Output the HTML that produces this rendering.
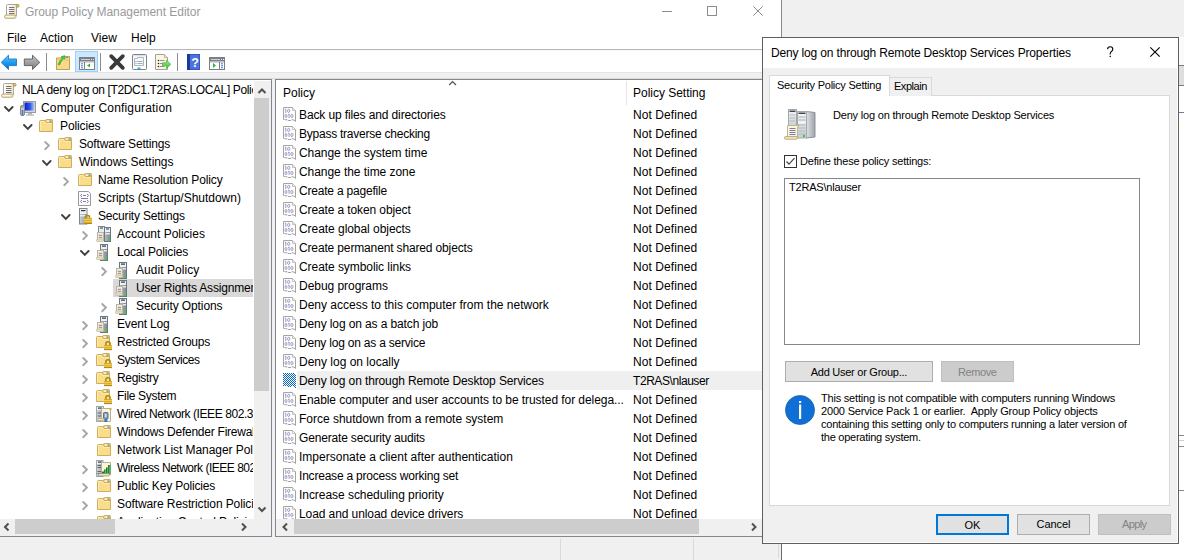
<!DOCTYPE html><html><head><meta charset="utf-8"><style>
html,body{margin:0;padding:0;width:1184px;height:560px;overflow:hidden;background:#f0f0f0;font-family:"Liberation Sans", sans-serif;}
.t{position:absolute;white-space:pre;font-family:"Liberation Sans", sans-serif;}
.bt{font-family:"Liberation Sans", sans-serif;font-size:11px;padding-top:0px;letter-spacing:-0.2px;white-space:pre}
svg{overflow:visible}
</style></head><body>
<div style="position:absolute;left:0px;top:0px;width:781px;height:72px;background:#fff"></div>
<div style="position:absolute;left:781px;top:0px;width:1px;height:38px;background:#8a8a8a"></div>
<div style="position:absolute;left:782px;top:0px;width:402px;height:560px;background:#f0f0f0"></div>
<svg style="position:absolute;left:4px;top:3px;" width="17" height="17" viewBox="0 0 17 17"><defs><linearGradient id="scg" x1="0" x2="1"><stop offset="0" stop-color="#fffdf4"/><stop offset="1" stop-color="#f8e8b0"/></linearGradient></defs><path d="M2.5 2.5 Q2.5 1.5 3.5 1.5 L13.5 1.5 L12.5 3 L12.5 12.5 L2.5 12.5 Z" fill="url(#scg)" stroke="#a6a6a6"/><circle cx="13.6" cy="2.8" r="1.5" fill="#d8c27a" stroke="#9c8a50" stroke-width="0.7"/><path d="M5 4.5h5.5M5 6.5h5.5M5 8.5h5.5M5 10.5h5.5" stroke="#6e6e98" stroke-width="1"/><rect x="0.5" y="12" width="11.5" height="3.3" rx="1.6" fill="#f7ebbc" stroke="#a9a27c" stroke-width="0.9"/><path d="M2 13.6h7" stroke="#fffbe8" stroke-width="0.9"/></svg>
<div class="t" style="left:25px;top:3px;font-size:12px;line-height:18px;color:#999999;;letter-spacing:-0.045px;">Group Policy Management Editor</div>
<div style="position:absolute;left:662px;top:11px;width:10px;height:1px;background:#8c8c8c"></div>
<div style="position:absolute;left:707px;top:6px;width:10px;height:10px;border:1px solid #8c8c8c;box-sizing:border-box"></div>
<svg style="position:absolute;left:753px;top:6px;" width="10" height="10" viewBox="0 0 10 10"><path d="M0.3 0.3 L9.7 9.7 M9.7 0.3 L0.3 9.7" stroke="#8c8c8c" stroke-width="1"/></svg>
<div class="t" style="left:7px;top:29px;font-size:12px;line-height:18px;color:#000;;">File</div>
<div class="t" style="left:40px;top:29px;font-size:12px;line-height:18px;color:#000;;">Action</div>
<div class="t" style="left:91px;top:29px;font-size:12px;line-height:18px;color:#000;;">View</div>
<div class="t" style="left:131px;top:29px;font-size:12px;line-height:18px;color:#000;;">Help</div>
<div style="position:absolute;left:0px;top:49px;width:781px;height:1px;background:#b9b9b9"></div>
<div style="position:absolute;left:0px;top:72px;width:781px;height:8px;background:#f0f0f0"></div>
<div style="position:absolute;left:0px;top:72px;width:781px;height:1px;background:#e4e4e4"></div>
<div style="position:absolute;left:0px;top:78px;width:781px;height:1px;background:#dadada"></div>
<div style="position:absolute;left:0px;top:79px;width:272px;height:458px;background:#fff;border:1px solid #828790;border-left:none;box-sizing:border-box"></div>
<div style="position:absolute;left:275px;top:79px;width:500px;height:458px;background:#fff;border:1px solid #828790;box-sizing:border-box"></div>
<div style="position:absolute;left:0px;top:50px;width:781px;height:1px;background:#f5f7fa"></div>
<svg style="position:absolute;left:0px;top:50px;" width="50" height="22" viewBox="0 0 50 22"><defs><linearGradient id="gb" x1="0" y1="0" x2="0" y2="1"><stop offset="0" stop-color="#6ccaff"/><stop offset="0.5" stop-color="#1e9cf0"/><stop offset="1" stop-color="#0a6fd0"/></linearGradient><linearGradient id="gg" x1="0" y1="0" x2="0" y2="1"><stop offset="0" stop-color="#c8c8c8"/><stop offset="1" stop-color="#7a7a7a"/></linearGradient></defs><path d="M1.2 12.4 L8.5 5.2 L8.5 9 L16.5 9 L16.5 15.6 L8.5 15.6 L8.5 19.5 Z" fill="url(#gb)" stroke="#1f78c8" stroke-width="0.9" stroke-linejoin="round"/><path d="M39.8 12.4 L32.5 5.2 L32.5 9 L24.3 9 L24.3 15.6 L32.5 15.6 L32.5 19.5 Z" fill="url(#gg)" stroke="#5a5a5a" stroke-width="0.9" stroke-linejoin="round"/></svg>
<div style="position:absolute;left:46px;top:53px;width:1px;height:18px;background:#8c8c8c"></div>
<svg style="position:absolute;left:56px;top:55px;" width="16" height="16" viewBox="0 0 16 16"><path d="M0.5 3 L5 3 L6 1.5 L13.5 1.5 L13.5 14.5 L0.5 14.5 Z" fill="#f8d98a" stroke="#c0a050"/><path d="M0.5 5 L13.5 5" stroke="#e9c46a"/><rect x="10" y="2" width="2" height="1" fill="#4a90e2"/><path d="M2 9.5 Q4 5 6.5 3 L5 2 L8.5 0.5 L9 4 L7.5 3.5 Q5 6 3.5 10 Z" fill="#3fd13f" stroke="#2a9a2a" stroke-width="0.6"/></svg>
<div style="position:absolute;left:75px;top:51px;width:23px;height:21px;background:#cce8ff;border:1px solid #99d1ff;box-sizing:border-box"></div>
<svg style="position:absolute;left:79px;top:57px;" width="16" height="13" viewBox="0 0 16 13"><rect x="0.5" y="0.5" width="15" height="12" fill="#fff" stroke="#7a7f88"/><rect x="1" y="1" width="14" height="3" fill="#7a7f88"/><rect x="2" y="2" width="9" height="0.8" fill="#e8e8e8"/><rect x="12" y="2" width="1" height="1" fill="#e8e8e8"/><rect x="14" y="2" width="1" height="1" fill="#e8e8e8"/><rect x="1" y="4.5" width="14" height="0.8" fill="#7a7f88"/><rect x="5" y="5" width="1" height="7" fill="#7a7f88"/><rect x="2" y="6.3" width="2" height="1" fill="#3c7ad0"/><rect x="2" y="8.3" width="2" height="1" fill="#3c7ad0"/><rect x="2" y="10.3" width="2" height="1" fill="#3c7ad0"/><path d="M11 6.5 L8 8.5 L11 10.5 Z" fill="#35b535"/></svg>
<div style="position:absolute;left:100px;top:53px;width:1px;height:18px;background:#8c8c8c"></div>
<svg style="position:absolute;left:109px;top:54px;" width="16" height="16" viewBox="0 0 16 16"><path d="M2.2 2.2 L13.8 13.8 M13.8 2.2 L2.2 13.8" stroke="#3a3a3a" stroke-width="3.8" stroke-linecap="round"/></svg>
<svg style="position:absolute;left:132px;top:54px;" width="16" height="16" viewBox="0 0 16 16"><rect x="0.5" y="0.5" width="14" height="15" rx="1" fill="#fff" stroke="#7d828a"/><rect x="1" y="1" width="13" height="1.5" fill="#dfe3e8"/><path d="M2.5 4.5 L5.5 4.5 L5.5 3.5 L11.5 3.5 L11.5 11.5 L2.5 11.5 Z" fill="#f7f9fb" stroke="#9aa3ad" stroke-width="0.8"/><rect x="3.5" y="7" width="1" height="1" fill="#1aa3ff"/><rect x="5.5" y="7" width="5" height="0.9" fill="#9aa3ad"/><rect x="3.5" y="9" width="1" height="1" fill="#9aa3ad"/><rect x="5.5" y="9" width="5" height="0.9" fill="#9aa3ad"/><rect x="5.5" y="13.5" width="3" height="1.5" fill="#1ab8ff"/></svg>
<svg style="position:absolute;left:155px;top:54px;" width="17" height="16" viewBox="0 0 17 16"><path d="M0.5 0.5 L9.5 0.5 L12.5 3.5 L12.5 15.5 L0.5 15.5 Z" fill="#fcf6dc" stroke="#a0a0a0"/><path d="M9.5 0.5 L9.5 3.5 L12.5 3.5" fill="#e8e8e8" stroke="#a8a8a8" stroke-width="0.8"/><circle cx="3.5" cy="6.5" r="0.8" fill="#222"/><rect x="5" y="6.1" width="4.5" height="0.9" fill="#8080b0"/><circle cx="3.5" cy="9.5" r="0.8" fill="#222"/><rect x="5" y="9.1" width="4.5" height="0.9" fill="#8080b0"/><circle cx="3.5" cy="12.5" r="0.8" fill="#222"/><rect x="5" y="12.1" width="4.5" height="0.9" fill="#8080b0"/><defs><linearGradient id="ga" x1="0" x2="0" y1="0" y2="1"><stop offset="0" stop-color="#9ff08a"/><stop offset="1" stop-color="#3cc02c"/></linearGradient></defs><path d="M7.5 8.8 L11.5 8.8 L11.5 6.2 L15.8 10.3 L11.5 14.4 L11.5 11.8 L7.5 11.8 Z" fill="url(#ga)" stroke="#46b236" stroke-width="0.7" stroke-linejoin="round"/></svg>
<div style="position:absolute;left:177px;top:53px;width:1px;height:18px;background:#8c8c8c"></div>
<svg style="position:absolute;left:187px;top:54px;" width="13" height="16" viewBox="0 0 13 16"><rect x="0" y="0" width="13" height="16" fill="#3357c8"/><rect x="0" y="0" width="3" height="16" fill="#1c37a0"/><rect x="3" y="1" width="9" height="14" fill="#4d72dc"/><text x="4.2" y="13" font-size="12.5" font-family="Liberation Sans" font-weight="bold" fill="#fff">?</text></svg>
<svg style="position:absolute;left:209px;top:57px;" width="16" height="13" viewBox="0 0 16 13"><rect x="0.5" y="0.5" width="15" height="12" fill="#fff" stroke="#7a7f88"/><rect x="1" y="1" width="14" height="3" fill="#7a7f88"/><rect x="2" y="2" width="9" height="0.8" fill="#e8e8e8"/><rect x="12" y="2" width="1" height="1" fill="#e8e8e8"/><rect x="14" y="2" width="1" height="1" fill="#e8e8e8"/><rect x="1" y="4.5" width="14" height="0.8" fill="#7a7f88"/><rect x="10" y="5" width="1" height="7" fill="#7a7f88"/><rect x="12" y="6.3" width="2" height="1" fill="#3c7ad0"/><rect x="12" y="8.3" width="2" height="1" fill="#3c7ad0"/><rect x="12" y="10.3" width="2" height="1" fill="#3c7ad0"/><path d="M4 6 L7 8.5 L4 11 Z" fill="#35b535"/></svg>
<div style="position:absolute;left:0px;top:81px;width:253px;height:438px;overflow:hidden"><svg style="position:absolute;left:1px;top:1px;" width="17" height="17" viewBox="0 0 17 17"><defs><linearGradient id="scg" x1="0" x2="1"><stop offset="0" stop-color="#fffdf4"/><stop offset="1" stop-color="#f8e8b0"/></linearGradient></defs><path d="M2.5 2.5 Q2.5 1.5 3.5 1.5 L13.5 1.5 L12.5 3 L12.5 12.5 L2.5 12.5 Z" fill="url(#scg)" stroke="#a6a6a6"/><circle cx="13.6" cy="2.8" r="1.5" fill="#d8c27a" stroke="#9c8a50" stroke-width="0.7"/><path d="M5 4.5h5.5M5 6.5h5.5M5 8.5h5.5M5 10.5h5.5" stroke="#6e6e98" stroke-width="1"/><rect x="0.5" y="12" width="11.5" height="3.3" rx="1.6" fill="#f7ebbc" stroke="#a9a27c" stroke-width="0.9"/><path d="M2 13.6h7" stroke="#fffbe8" stroke-width="0.9"/></svg><div class="t" style="left:22px;top:0px;font-size:12px;line-height:18px;color:#000;;letter-spacing:-0.368px;">NLA deny log on [T2DC1.T2RAS.LOCAL] Policy</div><svg style="position:absolute;left:4px;top:25px;" width="10" height="7" viewBox="0 0 10 7"><path d="M1 1 L4.8 4.8 L8.6 1" fill="none" stroke="#404040" stroke-width="1.9" stroke-linecap="round"/></svg><svg style="position:absolute;left:20px;top:20px;" width="17" height="16" viewBox="0 0 17 16"><defs><linearGradient id="scr" x1="0" x2="1"><stop offset="0" stop-color="#0a1fd0"/><stop offset="0.55" stop-color="#2a55e8"/><stop offset="1" stop-color="#b8ccf6"/></linearGradient></defs><rect x="3.5" y="0.5" width="12" height="11" fill="#d6d6d6" stroke="#9a9a9a"/><rect x="4.5" y="1.5" width="10" height="8" fill="url(#scr)"/><rect x="8" y="12" width="4" height="1.5" fill="#b5b5b5"/><rect x="6" y="13.5" width="8" height="1" fill="#a0a0a0"/><rect x="0.5" y="4.5" width="4" height="10" rx="1.5" fill="#c8c8c8" stroke="#8a8a8a"/><rect x="1.7" y="9" width="1.6" height="5.5" fill="#3a78d8"/><rect x="1.5" y="5.5" width="2" height="1" fill="#777"/></svg><div class="t" style="left:41px;top:18px;font-size:12px;line-height:18px;color:#000;;letter-spacing:0.167px;">Computer Configuration</div><svg style="position:absolute;left:23px;top:43px;" width="10" height="7" viewBox="0 0 10 7"><path d="M1 1 L4.8 4.8 L8.6 1" fill="none" stroke="#404040" stroke-width="1.9" stroke-linecap="round"/></svg><svg style="position:absolute;left:39px;top:37px;" width="14" height="15" viewBox="0 0 14 15"><path d="M6.5 4.5 L6.5 2.5 Q6.5 1.5 7.5 1.5 L13 1.5 Q13.5 1.5 13.5 2.5 L13.5 5" fill="#f3d07a" stroke="#cfae5a"/><rect x="8" y="2.6" width="2.5" height="1.1" fill="#ffffff"/><rect x="10.5" y="2.6" width="2" height="1.1" fill="#3f86e0"/><path d="M0.5 13.5 L0.5 3.5 Q0.5 2.5 1.5 2.5 L6 2.5 L7 4.5 L13.5 4.5 L13.5 13.5 Z" fill="#f9dc8c" stroke="#cfae5a"/><path d="M1.5 12.5 L1.5 3.5 L5.6 3.5 L6.6 5.5 L12.5 5.5" fill="none" stroke="#fdebb4" stroke-width="1"/></svg><div class="t" style="left:60px;top:36px;font-size:12px;line-height:18px;color:#000;;letter-spacing:-0.114px;">Policies</div><svg style="position:absolute;left:44px;top:60px;" width="7" height="10" viewBox="0 0 7 10"><path d="M1.2 1 L4.9 4.6 L1.2 8.2" fill="none" stroke="#a6a6a6" stroke-width="1.9" stroke-linecap="round"/></svg><svg style="position:absolute;left:58px;top:55px;" width="14" height="15" viewBox="0 0 14 15"><path d="M6.5 4.5 L6.5 2.5 Q6.5 1.5 7.5 1.5 L13 1.5 Q13.5 1.5 13.5 2.5 L13.5 5" fill="#f3d07a" stroke="#cfae5a"/><rect x="8" y="2.6" width="2.5" height="1.1" fill="#ffffff"/><rect x="10.5" y="2.6" width="2" height="1.1" fill="#3f86e0"/><path d="M0.5 13.5 L0.5 3.5 Q0.5 2.5 1.5 2.5 L6 2.5 L7 4.5 L13.5 4.5 L13.5 13.5 Z" fill="#f9dc8c" stroke="#cfae5a"/><path d="M1.5 12.5 L1.5 3.5 L5.6 3.5 L6.6 5.5 L12.5 5.5" fill="none" stroke="#fdebb4" stroke-width="1"/></svg><div class="t" style="left:79px;top:54px;font-size:12px;line-height:18px;color:#000;;letter-spacing:-0.175px;">Software Settings</div><svg style="position:absolute;left:42px;top:79px;" width="10" height="7" viewBox="0 0 10 7"><path d="M1 1 L4.8 4.8 L8.6 1" fill="none" stroke="#404040" stroke-width="1.9" stroke-linecap="round"/></svg><svg style="position:absolute;left:58px;top:73px;" width="14" height="15" viewBox="0 0 14 15"><path d="M6.5 4.5 L6.5 2.5 Q6.5 1.5 7.5 1.5 L13 1.5 Q13.5 1.5 13.5 2.5 L13.5 5" fill="#f3d07a" stroke="#cfae5a"/><rect x="8" y="2.6" width="2.5" height="1.1" fill="#ffffff"/><rect x="10.5" y="2.6" width="2" height="1.1" fill="#3f86e0"/><path d="M0.5 13.5 L0.5 3.5 Q0.5 2.5 1.5 2.5 L6 2.5 L7 4.5 L13.5 4.5 L13.5 13.5 Z" fill="#f9dc8c" stroke="#cfae5a"/><path d="M1.5 12.5 L1.5 3.5 L5.6 3.5 L6.6 5.5 L12.5 5.5" fill="none" stroke="#fdebb4" stroke-width="1"/></svg><div class="t" style="left:79px;top:72px;font-size:12px;line-height:18px;color:#000;;letter-spacing:-0.06px;">Windows Settings</div><svg style="position:absolute;left:63px;top:96px;" width="7" height="10" viewBox="0 0 7 10"><path d="M1.2 1 L4.9 4.6 L1.2 8.2" fill="none" stroke="#a6a6a6" stroke-width="1.9" stroke-linecap="round"/></svg><svg style="position:absolute;left:78px;top:91px;" width="14" height="15" viewBox="0 0 14 15"><path d="M6.5 4.5 L6.5 2.5 Q6.5 1.5 7.5 1.5 L13 1.5 Q13.5 1.5 13.5 2.5 L13.5 5" fill="#f3d07a" stroke="#cfae5a"/><rect x="8" y="2.6" width="2.5" height="1.1" fill="#ffffff"/><rect x="10.5" y="2.6" width="2" height="1.1" fill="#3f86e0"/><path d="M0.5 13.5 L0.5 3.5 Q0.5 2.5 1.5 2.5 L6 2.5 L7 4.5 L13.5 4.5 L13.5 13.5 Z" fill="#f9dc8c" stroke="#cfae5a"/><path d="M1.5 12.5 L1.5 3.5 L5.6 3.5 L6.6 5.5 L12.5 5.5" fill="none" stroke="#fdebb4" stroke-width="1"/></svg><div class="t" style="left:98px;top:90px;font-size:12px;line-height:18px;color:#000;;letter-spacing:-0.129px;">Name Resolution Policy</div><svg style="position:absolute;left:78px;top:110px;" width="14" height="16" viewBox="0 0 14 16"><path d="M0.5 0.5 L10.5 0.5 L12.5 2.5 L12.5 14.5 L0.5 14.5 Z" fill="#fafafa" stroke="#9a9a9a"/><path d="M4 3 L2.5 4.5 L4 6 M9 3 L10.5 4.5 L9 6 M5 4.5h3 M3 7.5h7 M4 9 L2.5 10.5 L4 12 M9 9 L10.5 10.5 L9 12 M5 10.5h3" fill="none" stroke="#7070a0" stroke-width="0.9"/></svg><div class="t" style="left:98px;top:108px;font-size:12px;line-height:18px;color:#000;;letter-spacing:-0.02px;">Scripts (Startup/Shutdown)</div><svg style="position:absolute;left:61px;top:133px;" width="10" height="7" viewBox="0 0 10 7"><path d="M1 1 L4.8 4.8 L8.6 1" fill="none" stroke="#404040" stroke-width="1.9" stroke-linecap="round"/></svg><svg style="position:absolute;left:77px;top:127px;" width="16" height="17" viewBox="0 0 16 17"><defs><linearGradient id="slg" x1="0" x2="1"><stop offset="0" stop-color="#c9d0d6"/><stop offset="1" stop-color="#8e98a0"/></linearGradient></defs><rect x="2.5" y="0.5" width="7.5" height="15.5" fill="url(#slg)" stroke="#7d8790"/><rect x="3" y="1" width="6.5" height="5" fill="#eef2f4"/><rect x="4" y="2" width="4.5" height="1.2" fill="#2a3a44"/><rect x="3" y="7" width="6.5" height="1.5" fill="#e6eaed"/><path d="M8.5 10.5 L8.5 9 Q8.5 7.5 10.5 7.5 Q12.5 7.5 12.5 9 L12.5 10.5" fill="none" stroke="#b08a1a" stroke-width="1.6"/><rect x="7" y="10" width="8" height="6" fill="#dcae28"/><path d="M7 11.5h8M7 13.5h8" stroke="#f0d060" stroke-width="0.8"/><rect x="7" y="15.2" width="8" height="0.8" fill="#a87e10"/></svg><div class="t" style="left:98px;top:126px;font-size:12px;line-height:18px;color:#000;;letter-spacing:-0.194px;">Security Settings</div><svg style="position:absolute;left:82px;top:150px;" width="7" height="10" viewBox="0 0 7 10"><path d="M1.2 1 L4.9 4.6 L1.2 8.2" fill="none" stroke="#a6a6a6" stroke-width="1.9" stroke-linecap="round"/></svg><svg style="position:absolute;left:96px;top:145px;" width="16" height="17" viewBox="0 0 16 17"><defs><linearGradient id="sg" x1="0" x2="1"><stop offset="0" stop-color="#b4bcc4"/><stop offset="1" stop-color="#7f8992"/></linearGradient></defs><rect x="2.5" y="0.5" width="6" height="14" fill="#e9ecef" stroke="#7d8590"/><rect x="4" y="1.5" width="3" height="1" fill="#2a3a44"/><rect x="8.5" y="1.5" width="6" height="14" fill="url(#sg)" stroke="#6e7780"/><rect x="9" y="2" width="5" height="4" fill="#eef1f3"/><rect x="10" y="2.5" width="3" height="1" fill="#2a3a44"/><rect x="9" y="7" width="5" height="1.5" fill="#e3e7ea"/><rect x="12" y="12.5" width="2" height="2" fill="#3ad23a"/><rect x="1.5" y="6.5" width="6" height="7" fill="#fbefc4" stroke="#b4b4b4"/><path d="M2.8 9.3h3.4M2.8 11.3h3.4" stroke="#7878b0" stroke-width="0.9"/><rect x="0.5" y="13" width="7" height="2.5" rx="0.8" fill="#efe0a8" stroke="#b8b8b8" stroke-width="0.7"/></svg><div class="t" style="left:117px;top:144px;font-size:12px;line-height:18px;color:#000;;letter-spacing:-0.007px;">Account Policies</div><svg style="position:absolute;left:80px;top:169px;" width="10" height="7" viewBox="0 0 10 7"><path d="M1 1 L4.8 4.8 L8.6 1" fill="none" stroke="#404040" stroke-width="1.9" stroke-linecap="round"/></svg><svg style="position:absolute;left:96px;top:163px;" width="16" height="17" viewBox="0 0 16 17"><defs><linearGradient id="sg" x1="0" x2="1"><stop offset="0" stop-color="#b4bcc4"/><stop offset="1" stop-color="#7f8992"/></linearGradient></defs><rect x="4.5" y="0.5" width="7" height="16" fill="url(#sg)" stroke="#6e7780"/><rect x="5" y="1" width="6" height="4" fill="#eef1f3"/><rect x="6" y="1.5" width="4" height="1.2" fill="#2a3a44"/><rect x="5" y="6" width="6" height="1.5" fill="#e3e7ea"/><rect x="9" y="13.5" width="2" height="2" fill="#3ad23a"/><rect x="1.5" y="6.5" width="6" height="7" fill="#fbefc4" stroke="#b4b4b4"/><path d="M2.8 9.3h3.4M2.8 11.3h3.4" stroke="#7878b0" stroke-width="0.9"/><rect x="0.5" y="13" width="7" height="2.5" rx="0.8" fill="#efe0a8" stroke="#b8b8b8" stroke-width="0.7"/></svg><div class="t" style="left:117px;top:162px;font-size:12px;line-height:18px;color:#000;;letter-spacing:-0.169px;">Local Policies</div><svg style="position:absolute;left:101px;top:186px;" width="7" height="10" viewBox="0 0 7 10"><path d="M1.2 1 L4.9 4.6 L1.2 8.2" fill="none" stroke="#a6a6a6" stroke-width="1.9" stroke-linecap="round"/></svg><svg style="position:absolute;left:115px;top:181px;" width="16" height="17" viewBox="0 0 16 17"><defs><linearGradient id="sg" x1="0" x2="1"><stop offset="0" stop-color="#b4bcc4"/><stop offset="1" stop-color="#7f8992"/></linearGradient></defs><rect x="4.5" y="0.5" width="7" height="16" fill="url(#sg)" stroke="#6e7780"/><rect x="5" y="1" width="6" height="4" fill="#eef1f3"/><rect x="6" y="1.5" width="4" height="1.2" fill="#2a3a44"/><rect x="5" y="6" width="6" height="1.5" fill="#e3e7ea"/><rect x="9" y="13.5" width="2" height="2" fill="#3ad23a"/><rect x="1.5" y="6.5" width="6" height="7" fill="#fbefc4" stroke="#b4b4b4"/><path d="M2.8 9.3h3.4M2.8 11.3h3.4" stroke="#7878b0" stroke-width="0.9"/><rect x="0.5" y="13" width="7" height="2.5" rx="0.8" fill="#efe0a8" stroke="#b8b8b8" stroke-width="0.7"/></svg><div class="t" style="left:136px;top:180px;font-size:12px;line-height:18px;color:#000;;letter-spacing:0.045px;">Audit Policy</div><div style="position:absolute;left:113px;top:198px;width:140px;height:18px;background:#d9d9d9"></div><svg style="position:absolute;left:115px;top:199px;" width="16" height="17" viewBox="0 0 16 17"><defs><linearGradient id="sg" x1="0" x2="1"><stop offset="0" stop-color="#b4bcc4"/><stop offset="1" stop-color="#7f8992"/></linearGradient></defs><rect x="4.5" y="0.5" width="7" height="16" fill="url(#sg)" stroke="#6e7780"/><rect x="5" y="1" width="6" height="4" fill="#eef1f3"/><rect x="6" y="1.5" width="4" height="1.2" fill="#2a3a44"/><rect x="5" y="6" width="6" height="1.5" fill="#e3e7ea"/><rect x="9" y="13.5" width="2" height="2" fill="#3ad23a"/><rect x="1.5" y="6.5" width="6" height="7" fill="#fbefc4" stroke="#b4b4b4"/><path d="M2.8 9.3h3.4M2.8 11.3h3.4" stroke="#7878b0" stroke-width="0.9"/><rect x="0.5" y="13" width="7" height="2.5" rx="0.8" fill="#efe0a8" stroke="#b8b8b8" stroke-width="0.7"/></svg><div class="t" style="left:136px;top:198px;font-size:12px;line-height:18px;color:#000;;letter-spacing:-0.174px;">User Rights Assignment</div><svg style="position:absolute;left:101px;top:222px;" width="7" height="10" viewBox="0 0 7 10"><path d="M1.2 1 L4.9 4.6 L1.2 8.2" fill="none" stroke="#a6a6a6" stroke-width="1.9" stroke-linecap="round"/></svg><svg style="position:absolute;left:115px;top:217px;" width="16" height="17" viewBox="0 0 16 17"><defs><linearGradient id="sg" x1="0" x2="1"><stop offset="0" stop-color="#b4bcc4"/><stop offset="1" stop-color="#7f8992"/></linearGradient></defs><rect x="4.5" y="0.5" width="7" height="16" fill="url(#sg)" stroke="#6e7780"/><rect x="5" y="1" width="6" height="4" fill="#eef1f3"/><rect x="6" y="1.5" width="4" height="1.2" fill="#2a3a44"/><rect x="5" y="6" width="6" height="1.5" fill="#e3e7ea"/><rect x="9" y="13.5" width="2" height="2" fill="#3ad23a"/><rect x="1.5" y="6.5" width="6" height="7" fill="#fbefc4" stroke="#b4b4b4"/><path d="M2.8 9.3h3.4M2.8 11.3h3.4" stroke="#7878b0" stroke-width="0.9"/><rect x="0.5" y="13" width="7" height="2.5" rx="0.8" fill="#efe0a8" stroke="#b8b8b8" stroke-width="0.7"/></svg><div class="t" style="left:136px;top:216px;font-size:12px;line-height:18px;color:#000;;letter-spacing:-0.1px;">Security Options</div><svg style="position:absolute;left:82px;top:240px;" width="7" height="10" viewBox="0 0 7 10"><path d="M1.2 1 L4.9 4.6 L1.2 8.2" fill="none" stroke="#a6a6a6" stroke-width="1.9" stroke-linecap="round"/></svg><svg style="position:absolute;left:96px;top:235px;" width="16" height="17" viewBox="0 0 16 17"><defs><linearGradient id="sg" x1="0" x2="1"><stop offset="0" stop-color="#b4bcc4"/><stop offset="1" stop-color="#7f8992"/></linearGradient></defs><rect x="4.5" y="0.5" width="7" height="16" fill="url(#sg)" stroke="#6e7780"/><rect x="5" y="1" width="6" height="4" fill="#eef1f3"/><rect x="6" y="1.5" width="4" height="1.2" fill="#2a3a44"/><rect x="5" y="6" width="6" height="1.5" fill="#e3e7ea"/><rect x="9" y="13.5" width="2" height="2" fill="#3ad23a"/><rect x="1.5" y="6.5" width="6" height="7" fill="#fbefc4" stroke="#b4b4b4"/><path d="M2.8 9.3h3.4M2.8 11.3h3.4" stroke="#7878b0" stroke-width="0.9"/><rect x="0.5" y="13" width="7" height="2.5" rx="0.8" fill="#efe0a8" stroke="#b8b8b8" stroke-width="0.7"/></svg><div class="t" style="left:117px;top:234px;font-size:12px;line-height:18px;color:#000;;letter-spacing:-0.175px;">Event Log</div><svg style="position:absolute;left:82px;top:258px;" width="7" height="10" viewBox="0 0 7 10"><path d="M1.2 1 L4.9 4.6 L1.2 8.2" fill="none" stroke="#a6a6a6" stroke-width="1.9" stroke-linecap="round"/></svg><svg style="position:absolute;left:96px;top:253px;" width="16" height="17" viewBox="0 0 16 17"><path d="M6.5 4.5 L6.5 2.5 Q6.5 1.5 7.5 1.5 L13 1.5 Q13.5 1.5 13.5 2.5 L13.5 5" fill="#f3d07a" stroke="#cfae5a"/><rect x="8" y="2.6" width="2.5" height="1.1" fill="#ffffff"/><rect x="10.5" y="2.6" width="2" height="1.1" fill="#3f86e0"/><path d="M0.5 13.5 L0.5 3.5 Q0.5 2.5 1.5 2.5 L6 2.5 L7 4.5 L13.5 4.5 L13.5 13.5 Z" fill="#f9dc8c" stroke="#cfae5a"/><path d="M1.5 12.5 L1.5 3.5 L5.6 3.5 L6.6 5.5 L12.5 5.5" fill="none" stroke="#fdebb4" stroke-width="1"/><path d="M9.9 11.5 L9.9 9.6 Q9.9 7.7 12 7.7 Q14.1 7.7 14.1 9.6 L14.1 11.5" fill="none" stroke="#a98516" stroke-width="1.5"/><rect x="11.2" y="9.3" width="1.6" height="2" fill="#f4e6a0"/><rect x="8" y="11" width="8" height="5" fill="#d9a820"/><path d="M8 12.5h8M8 14.3h8" stroke="#f2d766" stroke-width="0.8"/><rect x="8" y="15.3" width="8" height="0.8" fill="#a27a0e"/></svg><div class="t" style="left:117px;top:252px;font-size:12px;line-height:18px;color:#000;;letter-spacing:-0.213px;">Restricted Groups</div><svg style="position:absolute;left:82px;top:276px;" width="7" height="10" viewBox="0 0 7 10"><path d="M1.2 1 L4.9 4.6 L1.2 8.2" fill="none" stroke="#a6a6a6" stroke-width="1.9" stroke-linecap="round"/></svg><svg style="position:absolute;left:96px;top:271px;" width="16" height="17" viewBox="0 0 16 17"><path d="M6.5 4.5 L6.5 2.5 Q6.5 1.5 7.5 1.5 L13 1.5 Q13.5 1.5 13.5 2.5 L13.5 5" fill="#f3d07a" stroke="#cfae5a"/><rect x="8" y="2.6" width="2.5" height="1.1" fill="#ffffff"/><rect x="10.5" y="2.6" width="2" height="1.1" fill="#3f86e0"/><path d="M0.5 13.5 L0.5 3.5 Q0.5 2.5 1.5 2.5 L6 2.5 L7 4.5 L13.5 4.5 L13.5 13.5 Z" fill="#f9dc8c" stroke="#cfae5a"/><path d="M1.5 12.5 L1.5 3.5 L5.6 3.5 L6.6 5.5 L12.5 5.5" fill="none" stroke="#fdebb4" stroke-width="1"/><path d="M9.9 11.5 L9.9 9.6 Q9.9 7.7 12 7.7 Q14.1 7.7 14.1 9.6 L14.1 11.5" fill="none" stroke="#a98516" stroke-width="1.5"/><rect x="11.2" y="9.3" width="1.6" height="2" fill="#f4e6a0"/><rect x="8" y="11" width="8" height="5" fill="#d9a820"/><path d="M8 12.5h8M8 14.3h8" stroke="#f2d766" stroke-width="0.8"/><rect x="8" y="15.3" width="8" height="0.8" fill="#a27a0e"/></svg><div class="t" style="left:117px;top:270px;font-size:12px;line-height:18px;color:#000;;letter-spacing:-0.45px;">System Services</div><svg style="position:absolute;left:82px;top:294px;" width="7" height="10" viewBox="0 0 7 10"><path d="M1.2 1 L4.9 4.6 L1.2 8.2" fill="none" stroke="#a6a6a6" stroke-width="1.9" stroke-linecap="round"/></svg><svg style="position:absolute;left:96px;top:289px;" width="16" height="17" viewBox="0 0 16 17"><path d="M6.5 4.5 L6.5 2.5 Q6.5 1.5 7.5 1.5 L13 1.5 Q13.5 1.5 13.5 2.5 L13.5 5" fill="#f3d07a" stroke="#cfae5a"/><rect x="8" y="2.6" width="2.5" height="1.1" fill="#ffffff"/><rect x="10.5" y="2.6" width="2" height="1.1" fill="#3f86e0"/><path d="M0.5 13.5 L0.5 3.5 Q0.5 2.5 1.5 2.5 L6 2.5 L7 4.5 L13.5 4.5 L13.5 13.5 Z" fill="#f9dc8c" stroke="#cfae5a"/><path d="M1.5 12.5 L1.5 3.5 L5.6 3.5 L6.6 5.5 L12.5 5.5" fill="none" stroke="#fdebb4" stroke-width="1"/><path d="M9.9 11.5 L9.9 9.6 Q9.9 7.7 12 7.7 Q14.1 7.7 14.1 9.6 L14.1 11.5" fill="none" stroke="#a98516" stroke-width="1.5"/><rect x="11.2" y="9.3" width="1.6" height="2" fill="#f4e6a0"/><rect x="8" y="11" width="8" height="5" fill="#d9a820"/><path d="M8 12.5h8M8 14.3h8" stroke="#f2d766" stroke-width="0.8"/><rect x="8" y="15.3" width="8" height="0.8" fill="#a27a0e"/></svg><div class="t" style="left:117px;top:288px;font-size:12px;line-height:18px;color:#000;;letter-spacing:-0.329px;">Registry</div><svg style="position:absolute;left:82px;top:312px;" width="7" height="10" viewBox="0 0 7 10"><path d="M1.2 1 L4.9 4.6 L1.2 8.2" fill="none" stroke="#a6a6a6" stroke-width="1.9" stroke-linecap="round"/></svg><svg style="position:absolute;left:96px;top:307px;" width="16" height="17" viewBox="0 0 16 17"><path d="M6.5 4.5 L6.5 2.5 Q6.5 1.5 7.5 1.5 L13 1.5 Q13.5 1.5 13.5 2.5 L13.5 5" fill="#f3d07a" stroke="#cfae5a"/><rect x="8" y="2.6" width="2.5" height="1.1" fill="#ffffff"/><rect x="10.5" y="2.6" width="2" height="1.1" fill="#3f86e0"/><path d="M0.5 13.5 L0.5 3.5 Q0.5 2.5 1.5 2.5 L6 2.5 L7 4.5 L13.5 4.5 L13.5 13.5 Z" fill="#f9dc8c" stroke="#cfae5a"/><path d="M1.5 12.5 L1.5 3.5 L5.6 3.5 L6.6 5.5 L12.5 5.5" fill="none" stroke="#fdebb4" stroke-width="1"/><path d="M9.9 11.5 L9.9 9.6 Q9.9 7.7 12 7.7 Q14.1 7.7 14.1 9.6 L14.1 11.5" fill="none" stroke="#a98516" stroke-width="1.5"/><rect x="11.2" y="9.3" width="1.6" height="2" fill="#f4e6a0"/><rect x="8" y="11" width="8" height="5" fill="#d9a820"/><path d="M8 12.5h8M8 14.3h8" stroke="#f2d766" stroke-width="0.8"/><rect x="8" y="15.3" width="8" height="0.8" fill="#a27a0e"/></svg><div class="t" style="left:117px;top:306px;font-size:12px;line-height:18px;color:#000;;letter-spacing:-0.31px;">File System</div><svg style="position:absolute;left:82px;top:330px;" width="7" height="10" viewBox="0 0 7 10"><path d="M1.2 1 L4.9 4.6 L1.2 8.2" fill="none" stroke="#a6a6a6" stroke-width="1.9" stroke-linecap="round"/></svg><svg style="position:absolute;left:96px;top:325px;" width="16" height="17" viewBox="0 0 16 17"><defs><linearGradient id="wg" x1="0" x2="1"><stop offset="0" stop-color="#d5dade"/><stop offset="1" stop-color="#9aa3aa"/></linearGradient></defs><rect x="0.5" y="0.5" width="7" height="15" fill="url(#wg)" stroke="#a0a7ad"/><rect x="1" y="1" width="6" height="3" fill="#eef1f3"/><rect x="2" y="1.5" width="4" height="1.2" fill="#2a3a44"/><path d="M1.5 7h5M1.5 10h5" stroke="#5e666c"/><path d="M5.5 2.5 L14.5 2.5 L14.5 15.5 L5.5 15.5 Z" fill="#fcf4d4" stroke="#b5b09a"/><circle cx="14.5" cy="3" r="1.2" fill="#c8b060"/><rect x="7.5" y="6.5" width="4.5" height="6.5" rx="0.8" fill="#8d9fc0" stroke="#5b6d90"/><rect x="9.3" y="8" width="1" height="3" fill="#fff"/><rect x="8.3" y="13" width="3" height="3" fill="#2a7ad8"/><rect x="2" y="12.5" width="6" height="2" fill="#efe2ad" stroke="#b0a57a" stroke-width="0.6"/></svg><div class="t" style="left:117px;top:324px;font-size:12px;line-height:18px;color:#000;;letter-spacing:-0.427px;">Wired Network (IEEE 802.3) Policies</div><svg style="position:absolute;left:82px;top:348px;" width="7" height="10" viewBox="0 0 7 10"><path d="M1.2 1 L4.9 4.6 L1.2 8.2" fill="none" stroke="#a6a6a6" stroke-width="1.9" stroke-linecap="round"/></svg><svg style="position:absolute;left:97px;top:343px;" width="14" height="15" viewBox="0 0 14 15"><path d="M6.5 4.5 L6.5 2.5 Q6.5 1.5 7.5 1.5 L13 1.5 Q13.5 1.5 13.5 2.5 L13.5 5" fill="#f3d07a" stroke="#cfae5a"/><rect x="8" y="2.6" width="2.5" height="1.1" fill="#ffffff"/><rect x="10.5" y="2.6" width="2" height="1.1" fill="#3f86e0"/><path d="M0.5 13.5 L0.5 3.5 Q0.5 2.5 1.5 2.5 L6 2.5 L7 4.5 L13.5 4.5 L13.5 13.5 Z" fill="#f9dc8c" stroke="#cfae5a"/><path d="M1.5 12.5 L1.5 3.5 L5.6 3.5 L6.6 5.5 L12.5 5.5" fill="none" stroke="#fdebb4" stroke-width="1"/></svg><div class="t" style="left:117px;top:342px;font-size:12px;line-height:18px;color:#000;;letter-spacing:-0.245px;">Windows Defender Firewall with Advanced Security</div><svg style="position:absolute;left:97px;top:361px;" width="14" height="15" viewBox="0 0 14 15"><path d="M6.5 4.5 L6.5 2.5 Q6.5 1.5 7.5 1.5 L13 1.5 Q13.5 1.5 13.5 2.5 L13.5 5" fill="#f3d07a" stroke="#cfae5a"/><rect x="8" y="2.6" width="2.5" height="1.1" fill="#ffffff"/><rect x="10.5" y="2.6" width="2" height="1.1" fill="#3f86e0"/><path d="M0.5 13.5 L0.5 3.5 Q0.5 2.5 1.5 2.5 L6 2.5 L7 4.5 L13.5 4.5 L13.5 13.5 Z" fill="#f9dc8c" stroke="#cfae5a"/><path d="M1.5 12.5 L1.5 3.5 L5.6 3.5 L6.6 5.5 L12.5 5.5" fill="none" stroke="#fdebb4" stroke-width="1"/></svg><div class="t" style="left:117px;top:360px;font-size:12px;line-height:18px;color:#000;;letter-spacing:-0.061px;">Network List Manager Policies</div><svg style="position:absolute;left:82px;top:384px;" width="7" height="10" viewBox="0 0 7 10"><path d="M1.2 1 L4.9 4.6 L1.2 8.2" fill="none" stroke="#a6a6a6" stroke-width="1.9" stroke-linecap="round"/></svg><svg style="position:absolute;left:96px;top:379px;" width="16" height="17" viewBox="0 0 16 17"><defs><linearGradient id="wlg" x1="0" x2="1"><stop offset="0" stop-color="#d5dade"/><stop offset="1" stop-color="#9aa3aa"/></linearGradient></defs><rect x="0.5" y="0.5" width="6.5" height="16" fill="url(#wlg)" stroke="#a0a7ad"/><rect x="1" y="1" width="5.5" height="3" fill="#eef1f3"/><rect x="2" y="1.5" width="4" height="1.2" fill="#2a3a44"/><path d="M1.5 5.5h4.5M1.5 7.5h4.5M1.5 11.5h4.5M1.5 13.5h4.5" stroke="#5e666c"/><path d="M5.5 2.5 L14.5 2.5 L14.5 14.5 L5.5 14.5 Z" fill="#fcf4d4" stroke="#b5b09a"/><rect x="6" y="11.5" width="2" height="3" fill="#157a28"/><rect x="8" y="9.5" width="2" height="5" fill="#1c8a30"/><rect x="10" y="7.5" width="2" height="7" fill="#157a28"/><rect x="12" y="5" width="2.5" height="9.5" fill="#1c8a30"/><path d="M9.5 10v4.5M11.5 8v6.5M13.8 5.5v9" stroke="#b8e8b8" stroke-width="0.5"/><rect x="2.5" y="13.5" width="11" height="2.5" rx="1" fill="#efe2ad" stroke="#8a8a70" stroke-width="0.7"/></svg><div class="t" style="left:117px;top:378px;font-size:12px;line-height:18px;color:#000;;letter-spacing:-0.487px;">Wireless Network (IEEE 802.11) Policies</div><svg style="position:absolute;left:82px;top:402px;" width="7" height="10" viewBox="0 0 7 10"><path d="M1.2 1 L4.9 4.6 L1.2 8.2" fill="none" stroke="#a6a6a6" stroke-width="1.9" stroke-linecap="round"/></svg><svg style="position:absolute;left:97px;top:397px;" width="14" height="15" viewBox="0 0 14 15"><path d="M6.5 4.5 L6.5 2.5 Q6.5 1.5 7.5 1.5 L13 1.5 Q13.5 1.5 13.5 2.5 L13.5 5" fill="#f3d07a" stroke="#cfae5a"/><rect x="8" y="2.6" width="2.5" height="1.1" fill="#ffffff"/><rect x="10.5" y="2.6" width="2" height="1.1" fill="#3f86e0"/><path d="M0.5 13.5 L0.5 3.5 Q0.5 2.5 1.5 2.5 L6 2.5 L7 4.5 L13.5 4.5 L13.5 13.5 Z" fill="#f9dc8c" stroke="#cfae5a"/><path d="M1.5 12.5 L1.5 3.5 L5.6 3.5 L6.6 5.5 L12.5 5.5" fill="none" stroke="#fdebb4" stroke-width="1"/></svg><div class="t" style="left:117px;top:396px;font-size:12px;line-height:18px;color:#000;;letter-spacing:-0.167px;">Public Key Policies</div><svg style="position:absolute;left:82px;top:420px;" width="7" height="10" viewBox="0 0 7 10"><path d="M1.2 1 L4.9 4.6 L1.2 8.2" fill="none" stroke="#a6a6a6" stroke-width="1.9" stroke-linecap="round"/></svg><svg style="position:absolute;left:97px;top:415px;" width="14" height="15" viewBox="0 0 14 15"><path d="M6.5 4.5 L6.5 2.5 Q6.5 1.5 7.5 1.5 L13 1.5 Q13.5 1.5 13.5 2.5 L13.5 5" fill="#f3d07a" stroke="#cfae5a"/><rect x="8" y="2.6" width="2.5" height="1.1" fill="#ffffff"/><rect x="10.5" y="2.6" width="2" height="1.1" fill="#3f86e0"/><path d="M0.5 13.5 L0.5 3.5 Q0.5 2.5 1.5 2.5 L6 2.5 L7 4.5 L13.5 4.5 L13.5 13.5 Z" fill="#f9dc8c" stroke="#cfae5a"/><path d="M1.5 12.5 L1.5 3.5 L5.6 3.5 L6.6 5.5 L12.5 5.5" fill="none" stroke="#fdebb4" stroke-width="1"/></svg><div class="t" style="left:117px;top:414px;font-size:12px;line-height:18px;color:#000;;letter-spacing:-0.096px;">Software Restriction Policies</div><svg style="position:absolute;left:82px;top:438px;" width="7" height="10" viewBox="0 0 7 10"><path d="M1.2 1 L4.9 4.6 L1.2 8.2" fill="none" stroke="#a6a6a6" stroke-width="1.9" stroke-linecap="round"/></svg><svg style="position:absolute;left:97px;top:433px;" width="14" height="15" viewBox="0 0 14 15"><path d="M6.5 4.5 L6.5 2.5 Q6.5 1.5 7.5 1.5 L13 1.5 Q13.5 1.5 13.5 2.5 L13.5 5" fill="#f3d07a" stroke="#cfae5a"/><rect x="8" y="2.6" width="2.5" height="1.1" fill="#ffffff"/><rect x="10.5" y="2.6" width="2" height="1.1" fill="#3f86e0"/><path d="M0.5 13.5 L0.5 3.5 Q0.5 2.5 1.5 2.5 L6 2.5 L7 4.5 L13.5 4.5 L13.5 13.5 Z" fill="#f9dc8c" stroke="#cfae5a"/><path d="M1.5 12.5 L1.5 3.5 L5.6 3.5 L6.6 5.5 L12.5 5.5" fill="none" stroke="#fdebb4" stroke-width="1"/></svg><div class="t" style="left:117px;top:432px;font-size:12px;line-height:18px;color:#000;;letter-spacing:-0.1px;">Application Control Policies</div></div>
<div style="position:absolute;left:254px;top:81px;width:17px;height:438px;background:#f0f0f0"></div>
<div style="position:absolute;left:254px;top:98px;width:15px;height:293px;background:#cdcdcd"></div>
<svg style="position:absolute;left:254px;top:81px;" width="17" height="17" viewBox="0 0 17 17"><path d="M4.5 12 L8 8.5 L11.5 12" fill="none" stroke="#505050" stroke-width="2"/></svg>
<svg style="position:absolute;left:254px;top:501px;" width="17" height="17" viewBox="0 0 17 17"><path d="M4.5 6.5 L8 10 L11.5 6.5" fill="none" stroke="#505050" stroke-width="2"/></svg>
<div style="position:absolute;left:0px;top:519px;width:271px;height:17px;background:#f0f0f0"></div>
<div style="position:absolute;left:15px;top:519px;width:100px;height:15px;background:#cdcdcd"></div>
<svg style="position:absolute;left:0px;top:519px;" width="15" height="16" viewBox="0 0 15 16"><path d="M8.5 4.5 L5 8 L8.5 11.5" fill="none" stroke="#505050" stroke-width="2"/></svg>
<svg style="position:absolute;left:237px;top:519px;" width="15" height="16" viewBox="0 0 15 16"><path d="M5 4.5 L8.5 8 L5 11.5" fill="none" stroke="#505050" stroke-width="2"/></svg>
<div style="position:absolute;left:276px;top:80px;width:500px;height:439px;overflow:hidden"><svg style="position:absolute;left:7px;top:27px;" width="14" height="16" viewBox="0 0 14 16"><path d="M0.5 0.5 L9.5 0.5 L12.5 3.5 L12.5 14.5 L11 13 L10 13 L9 12.5 L8 13.5 L5 13.5 L4 12.5 L3 13 L1.5 12.5 L0.5 12.5 Z" fill="#ffffff" stroke="#a4a4a4" stroke-width="1"/><path d="M9.5 0.5 L9.5 3.5 L12.5 3.5" fill="#ececec" stroke="#b8b8b8" stroke-width="0.8"/><path d="M1.8 2.6 L2.8 2 L2.8 6" fill="none" stroke="#8e8eb8" stroke-width="0.9"/><ellipse cx="5.7" cy="3.9" rx="1.1" ry="1.6" fill="none" stroke="#8e8eb8" stroke-width="0.85"/><ellipse cx="3" cy="9" rx="1" ry="1.6" fill="none" stroke="#8e8eb8" stroke-width="0.85"/><path d="M5.1 7.6 L6.1 7 L6.1 11" fill="none" stroke="#8e8eb8" stroke-width="0.9"/><ellipse cx="8.9" cy="9" rx="1.1" ry="1.6" fill="none" stroke="#8e8eb8" stroke-width="0.85"/></svg><div class="t" style="left:23px;top:26px;font-size:12px;line-height:19px;color:#000;;letter-spacing:-0.121px;">Back up files and directories</div><div class="t" style="left:357px;top:26px;font-size:12px;line-height:19px;color:#000;;letter-spacing:0.08px;">Not Defined</div><svg style="position:absolute;left:7px;top:46px;" width="14" height="16" viewBox="0 0 14 16"><path d="M0.5 0.5 L9.5 0.5 L12.5 3.5 L12.5 14.5 L11 13 L10 13 L9 12.5 L8 13.5 L5 13.5 L4 12.5 L3 13 L1.5 12.5 L0.5 12.5 Z" fill="#ffffff" stroke="#a4a4a4" stroke-width="1"/><path d="M9.5 0.5 L9.5 3.5 L12.5 3.5" fill="#ececec" stroke="#b8b8b8" stroke-width="0.8"/><path d="M1.8 2.6 L2.8 2 L2.8 6" fill="none" stroke="#8e8eb8" stroke-width="0.9"/><ellipse cx="5.7" cy="3.9" rx="1.1" ry="1.6" fill="none" stroke="#8e8eb8" stroke-width="0.85"/><ellipse cx="3" cy="9" rx="1" ry="1.6" fill="none" stroke="#8e8eb8" stroke-width="0.85"/><path d="M5.1 7.6 L6.1 7 L6.1 11" fill="none" stroke="#8e8eb8" stroke-width="0.9"/><ellipse cx="8.9" cy="9" rx="1.1" ry="1.6" fill="none" stroke="#8e8eb8" stroke-width="0.85"/></svg><div class="t" style="left:23px;top:45px;font-size:12px;line-height:19px;color:#000;;letter-spacing:-0.239px;">Bypass traverse checking</div><div class="t" style="left:357px;top:45px;font-size:12px;line-height:19px;color:#000;;letter-spacing:0.08px;">Not Defined</div><svg style="position:absolute;left:7px;top:65px;" width="14" height="16" viewBox="0 0 14 16"><path d="M0.5 0.5 L9.5 0.5 L12.5 3.5 L12.5 14.5 L11 13 L10 13 L9 12.5 L8 13.5 L5 13.5 L4 12.5 L3 13 L1.5 12.5 L0.5 12.5 Z" fill="#ffffff" stroke="#a4a4a4" stroke-width="1"/><path d="M9.5 0.5 L9.5 3.5 L12.5 3.5" fill="#ececec" stroke="#b8b8b8" stroke-width="0.8"/><path d="M1.8 2.6 L2.8 2 L2.8 6" fill="none" stroke="#8e8eb8" stroke-width="0.9"/><ellipse cx="5.7" cy="3.9" rx="1.1" ry="1.6" fill="none" stroke="#8e8eb8" stroke-width="0.85"/><ellipse cx="3" cy="9" rx="1" ry="1.6" fill="none" stroke="#8e8eb8" stroke-width="0.85"/><path d="M5.1 7.6 L6.1 7 L6.1 11" fill="none" stroke="#8e8eb8" stroke-width="0.9"/><ellipse cx="8.9" cy="9" rx="1.1" ry="1.6" fill="none" stroke="#8e8eb8" stroke-width="0.85"/></svg><div class="t" style="left:23px;top:64px;font-size:12px;line-height:19px;color:#000;;letter-spacing:-0.052px;">Change the system time</div><div class="t" style="left:357px;top:64px;font-size:12px;line-height:19px;color:#000;;letter-spacing:0.08px;">Not Defined</div><svg style="position:absolute;left:7px;top:84px;" width="14" height="16" viewBox="0 0 14 16"><path d="M0.5 0.5 L9.5 0.5 L12.5 3.5 L12.5 14.5 L11 13 L10 13 L9 12.5 L8 13.5 L5 13.5 L4 12.5 L3 13 L1.5 12.5 L0.5 12.5 Z" fill="#ffffff" stroke="#a4a4a4" stroke-width="1"/><path d="M9.5 0.5 L9.5 3.5 L12.5 3.5" fill="#ececec" stroke="#b8b8b8" stroke-width="0.8"/><path d="M1.8 2.6 L2.8 2 L2.8 6" fill="none" stroke="#8e8eb8" stroke-width="0.9"/><ellipse cx="5.7" cy="3.9" rx="1.1" ry="1.6" fill="none" stroke="#8e8eb8" stroke-width="0.85"/><ellipse cx="3" cy="9" rx="1" ry="1.6" fill="none" stroke="#8e8eb8" stroke-width="0.85"/><path d="M5.1 7.6 L6.1 7 L6.1 11" fill="none" stroke="#8e8eb8" stroke-width="0.9"/><ellipse cx="8.9" cy="9" rx="1.1" ry="1.6" fill="none" stroke="#8e8eb8" stroke-width="0.85"/></svg><div class="t" style="left:23px;top:83px;font-size:12px;line-height:19px;color:#000;;letter-spacing:-0.058px;">Change the time zone</div><div class="t" style="left:357px;top:83px;font-size:12px;line-height:19px;color:#000;;letter-spacing:0.08px;">Not Defined</div><svg style="position:absolute;left:7px;top:103px;" width="14" height="16" viewBox="0 0 14 16"><path d="M0.5 0.5 L9.5 0.5 L12.5 3.5 L12.5 14.5 L11 13 L10 13 L9 12.5 L8 13.5 L5 13.5 L4 12.5 L3 13 L1.5 12.5 L0.5 12.5 Z" fill="#ffffff" stroke="#a4a4a4" stroke-width="1"/><path d="M9.5 0.5 L9.5 3.5 L12.5 3.5" fill="#ececec" stroke="#b8b8b8" stroke-width="0.8"/><path d="M1.8 2.6 L2.8 2 L2.8 6" fill="none" stroke="#8e8eb8" stroke-width="0.9"/><ellipse cx="5.7" cy="3.9" rx="1.1" ry="1.6" fill="none" stroke="#8e8eb8" stroke-width="0.85"/><ellipse cx="3" cy="9" rx="1" ry="1.6" fill="none" stroke="#8e8eb8" stroke-width="0.85"/><path d="M5.1 7.6 L6.1 7 L6.1 11" fill="none" stroke="#8e8eb8" stroke-width="0.9"/><ellipse cx="8.9" cy="9" rx="1.1" ry="1.6" fill="none" stroke="#8e8eb8" stroke-width="0.85"/></svg><div class="t" style="left:23px;top:102px;font-size:12px;line-height:19px;color:#000;;letter-spacing:-0.206px;">Create a pagefile</div><div class="t" style="left:357px;top:102px;font-size:12px;line-height:19px;color:#000;;letter-spacing:0.08px;">Not Defined</div><svg style="position:absolute;left:7px;top:122px;" width="14" height="16" viewBox="0 0 14 16"><path d="M0.5 0.5 L9.5 0.5 L12.5 3.5 L12.5 14.5 L11 13 L10 13 L9 12.5 L8 13.5 L5 13.5 L4 12.5 L3 13 L1.5 12.5 L0.5 12.5 Z" fill="#ffffff" stroke="#a4a4a4" stroke-width="1"/><path d="M9.5 0.5 L9.5 3.5 L12.5 3.5" fill="#ececec" stroke="#b8b8b8" stroke-width="0.8"/><path d="M1.8 2.6 L2.8 2 L2.8 6" fill="none" stroke="#8e8eb8" stroke-width="0.9"/><ellipse cx="5.7" cy="3.9" rx="1.1" ry="1.6" fill="none" stroke="#8e8eb8" stroke-width="0.85"/><ellipse cx="3" cy="9" rx="1" ry="1.6" fill="none" stroke="#8e8eb8" stroke-width="0.85"/><path d="M5.1 7.6 L6.1 7 L6.1 11" fill="none" stroke="#8e8eb8" stroke-width="0.9"/><ellipse cx="8.9" cy="9" rx="1.1" ry="1.6" fill="none" stroke="#8e8eb8" stroke-width="0.85"/></svg><div class="t" style="left:23px;top:121px;font-size:12px;line-height:19px;color:#000;;letter-spacing:-0.115px;">Create a token object</div><div class="t" style="left:357px;top:121px;font-size:12px;line-height:19px;color:#000;;letter-spacing:0.08px;">Not Defined</div><svg style="position:absolute;left:7px;top:141px;" width="14" height="16" viewBox="0 0 14 16"><path d="M0.5 0.5 L9.5 0.5 L12.5 3.5 L12.5 14.5 L11 13 L10 13 L9 12.5 L8 13.5 L5 13.5 L4 12.5 L3 13 L1.5 12.5 L0.5 12.5 Z" fill="#ffffff" stroke="#a4a4a4" stroke-width="1"/><path d="M9.5 0.5 L9.5 3.5 L12.5 3.5" fill="#ececec" stroke="#b8b8b8" stroke-width="0.8"/><path d="M1.8 2.6 L2.8 2 L2.8 6" fill="none" stroke="#8e8eb8" stroke-width="0.9"/><ellipse cx="5.7" cy="3.9" rx="1.1" ry="1.6" fill="none" stroke="#8e8eb8" stroke-width="0.85"/><ellipse cx="3" cy="9" rx="1" ry="1.6" fill="none" stroke="#8e8eb8" stroke-width="0.85"/><path d="M5.1 7.6 L6.1 7 L6.1 11" fill="none" stroke="#8e8eb8" stroke-width="0.9"/><ellipse cx="8.9" cy="9" rx="1.1" ry="1.6" fill="none" stroke="#8e8eb8" stroke-width="0.85"/></svg><div class="t" style="left:23px;top:140px;font-size:12px;line-height:19px;color:#000;;letter-spacing:-0.05px;">Create global objects</div><div class="t" style="left:357px;top:140px;font-size:12px;line-height:19px;color:#000;;letter-spacing:0.08px;">Not Defined</div><svg style="position:absolute;left:7px;top:160px;" width="14" height="16" viewBox="0 0 14 16"><path d="M0.5 0.5 L9.5 0.5 L12.5 3.5 L12.5 14.5 L11 13 L10 13 L9 12.5 L8 13.5 L5 13.5 L4 12.5 L3 13 L1.5 12.5 L0.5 12.5 Z" fill="#ffffff" stroke="#a4a4a4" stroke-width="1"/><path d="M9.5 0.5 L9.5 3.5 L12.5 3.5" fill="#ececec" stroke="#b8b8b8" stroke-width="0.8"/><path d="M1.8 2.6 L2.8 2 L2.8 6" fill="none" stroke="#8e8eb8" stroke-width="0.9"/><ellipse cx="5.7" cy="3.9" rx="1.1" ry="1.6" fill="none" stroke="#8e8eb8" stroke-width="0.85"/><ellipse cx="3" cy="9" rx="1" ry="1.6" fill="none" stroke="#8e8eb8" stroke-width="0.85"/><path d="M5.1 7.6 L6.1 7 L6.1 11" fill="none" stroke="#8e8eb8" stroke-width="0.9"/><ellipse cx="8.9" cy="9" rx="1.1" ry="1.6" fill="none" stroke="#8e8eb8" stroke-width="0.85"/></svg><div class="t" style="left:23px;top:159px;font-size:12px;line-height:19px;color:#000;;letter-spacing:-0.147px;">Create permanent shared objects</div><div class="t" style="left:357px;top:159px;font-size:12px;line-height:19px;color:#000;;letter-spacing:0.08px;">Not Defined</div><svg style="position:absolute;left:7px;top:179px;" width="14" height="16" viewBox="0 0 14 16"><path d="M0.5 0.5 L9.5 0.5 L12.5 3.5 L12.5 14.5 L11 13 L10 13 L9 12.5 L8 13.5 L5 13.5 L4 12.5 L3 13 L1.5 12.5 L0.5 12.5 Z" fill="#ffffff" stroke="#a4a4a4" stroke-width="1"/><path d="M9.5 0.5 L9.5 3.5 L12.5 3.5" fill="#ececec" stroke="#b8b8b8" stroke-width="0.8"/><path d="M1.8 2.6 L2.8 2 L2.8 6" fill="none" stroke="#8e8eb8" stroke-width="0.9"/><ellipse cx="5.7" cy="3.9" rx="1.1" ry="1.6" fill="none" stroke="#8e8eb8" stroke-width="0.85"/><ellipse cx="3" cy="9" rx="1" ry="1.6" fill="none" stroke="#8e8eb8" stroke-width="0.85"/><path d="M5.1 7.6 L6.1 7 L6.1 11" fill="none" stroke="#8e8eb8" stroke-width="0.9"/><ellipse cx="8.9" cy="9" rx="1.1" ry="1.6" fill="none" stroke="#8e8eb8" stroke-width="0.85"/></svg><div class="t" style="left:23px;top:178px;font-size:12px;line-height:19px;color:#000;;letter-spacing:-0.065px;">Create symbolic links</div><div class="t" style="left:357px;top:178px;font-size:12px;line-height:19px;color:#000;;letter-spacing:0.08px;">Not Defined</div><svg style="position:absolute;left:7px;top:198px;" width="14" height="16" viewBox="0 0 14 16"><path d="M0.5 0.5 L9.5 0.5 L12.5 3.5 L12.5 14.5 L11 13 L10 13 L9 12.5 L8 13.5 L5 13.5 L4 12.5 L3 13 L1.5 12.5 L0.5 12.5 Z" fill="#ffffff" stroke="#a4a4a4" stroke-width="1"/><path d="M9.5 0.5 L9.5 3.5 L12.5 3.5" fill="#ececec" stroke="#b8b8b8" stroke-width="0.8"/><path d="M1.8 2.6 L2.8 2 L2.8 6" fill="none" stroke="#8e8eb8" stroke-width="0.9"/><ellipse cx="5.7" cy="3.9" rx="1.1" ry="1.6" fill="none" stroke="#8e8eb8" stroke-width="0.85"/><ellipse cx="3" cy="9" rx="1" ry="1.6" fill="none" stroke="#8e8eb8" stroke-width="0.85"/><path d="M5.1 7.6 L6.1 7 L6.1 11" fill="none" stroke="#8e8eb8" stroke-width="0.9"/><ellipse cx="8.9" cy="9" rx="1.1" ry="1.6" fill="none" stroke="#8e8eb8" stroke-width="0.85"/></svg><div class="t" style="left:23px;top:197px;font-size:12px;line-height:19px;color:#000;;letter-spacing:-0.038px;">Debug programs</div><div class="t" style="left:357px;top:197px;font-size:12px;line-height:19px;color:#000;;letter-spacing:0.08px;">Not Defined</div><svg style="position:absolute;left:7px;top:217px;" width="14" height="16" viewBox="0 0 14 16"><path d="M0.5 0.5 L9.5 0.5 L12.5 3.5 L12.5 14.5 L11 13 L10 13 L9 12.5 L8 13.5 L5 13.5 L4 12.5 L3 13 L1.5 12.5 L0.5 12.5 Z" fill="#ffffff" stroke="#a4a4a4" stroke-width="1"/><path d="M9.5 0.5 L9.5 3.5 L12.5 3.5" fill="#ececec" stroke="#b8b8b8" stroke-width="0.8"/><path d="M1.8 2.6 L2.8 2 L2.8 6" fill="none" stroke="#8e8eb8" stroke-width="0.9"/><ellipse cx="5.7" cy="3.9" rx="1.1" ry="1.6" fill="none" stroke="#8e8eb8" stroke-width="0.85"/><ellipse cx="3" cy="9" rx="1" ry="1.6" fill="none" stroke="#8e8eb8" stroke-width="0.85"/><path d="M5.1 7.6 L6.1 7 L6.1 11" fill="none" stroke="#8e8eb8" stroke-width="0.9"/><ellipse cx="8.9" cy="9" rx="1.1" ry="1.6" fill="none" stroke="#8e8eb8" stroke-width="0.85"/></svg><div class="t" style="left:23px;top:216px;font-size:12px;line-height:19px;color:#000;;letter-spacing:-0.007px;">Deny access to this computer from the network</div><div class="t" style="left:357px;top:216px;font-size:12px;line-height:19px;color:#000;;letter-spacing:0.08px;">Not Defined</div><svg style="position:absolute;left:7px;top:236px;" width="14" height="16" viewBox="0 0 14 16"><path d="M0.5 0.5 L9.5 0.5 L12.5 3.5 L12.5 14.5 L11 13 L10 13 L9 12.5 L8 13.5 L5 13.5 L4 12.5 L3 13 L1.5 12.5 L0.5 12.5 Z" fill="#ffffff" stroke="#a4a4a4" stroke-width="1"/><path d="M9.5 0.5 L9.5 3.5 L12.5 3.5" fill="#ececec" stroke="#b8b8b8" stroke-width="0.8"/><path d="M1.8 2.6 L2.8 2 L2.8 6" fill="none" stroke="#8e8eb8" stroke-width="0.9"/><ellipse cx="5.7" cy="3.9" rx="1.1" ry="1.6" fill="none" stroke="#8e8eb8" stroke-width="0.85"/><ellipse cx="3" cy="9" rx="1" ry="1.6" fill="none" stroke="#8e8eb8" stroke-width="0.85"/><path d="M5.1 7.6 L6.1 7 L6.1 11" fill="none" stroke="#8e8eb8" stroke-width="0.9"/><ellipse cx="8.9" cy="9" rx="1.1" ry="1.6" fill="none" stroke="#8e8eb8" stroke-width="0.85"/></svg><div class="t" style="left:23px;top:235px;font-size:12px;line-height:19px;color:#000;;letter-spacing:-0.116px;">Deny log on as a batch job</div><div class="t" style="left:357px;top:235px;font-size:12px;line-height:19px;color:#000;;letter-spacing:0.08px;">Not Defined</div><svg style="position:absolute;left:7px;top:255px;" width="14" height="16" viewBox="0 0 14 16"><path d="M0.5 0.5 L9.5 0.5 L12.5 3.5 L12.5 14.5 L11 13 L10 13 L9 12.5 L8 13.5 L5 13.5 L4 12.5 L3 13 L1.5 12.5 L0.5 12.5 Z" fill="#ffffff" stroke="#a4a4a4" stroke-width="1"/><path d="M9.5 0.5 L9.5 3.5 L12.5 3.5" fill="#ececec" stroke="#b8b8b8" stroke-width="0.8"/><path d="M1.8 2.6 L2.8 2 L2.8 6" fill="none" stroke="#8e8eb8" stroke-width="0.9"/><ellipse cx="5.7" cy="3.9" rx="1.1" ry="1.6" fill="none" stroke="#8e8eb8" stroke-width="0.85"/><ellipse cx="3" cy="9" rx="1" ry="1.6" fill="none" stroke="#8e8eb8" stroke-width="0.85"/><path d="M5.1 7.6 L6.1 7 L6.1 11" fill="none" stroke="#8e8eb8" stroke-width="0.9"/><ellipse cx="8.9" cy="9" rx="1.1" ry="1.6" fill="none" stroke="#8e8eb8" stroke-width="0.85"/></svg><div class="t" style="left:23px;top:254px;font-size:12px;line-height:19px;color:#000;;letter-spacing:-0.217px;">Deny log on as a service</div><div class="t" style="left:357px;top:254px;font-size:12px;line-height:19px;color:#000;;letter-spacing:0.08px;">Not Defined</div><svg style="position:absolute;left:7px;top:274px;" width="14" height="16" viewBox="0 0 14 16"><path d="M0.5 0.5 L9.5 0.5 L12.5 3.5 L12.5 14.5 L11 13 L10 13 L9 12.5 L8 13.5 L5 13.5 L4 12.5 L3 13 L1.5 12.5 L0.5 12.5 Z" fill="#ffffff" stroke="#a4a4a4" stroke-width="1"/><path d="M9.5 0.5 L9.5 3.5 L12.5 3.5" fill="#ececec" stroke="#b8b8b8" stroke-width="0.8"/><path d="M1.8 2.6 L2.8 2 L2.8 6" fill="none" stroke="#8e8eb8" stroke-width="0.9"/><ellipse cx="5.7" cy="3.9" rx="1.1" ry="1.6" fill="none" stroke="#8e8eb8" stroke-width="0.85"/><ellipse cx="3" cy="9" rx="1" ry="1.6" fill="none" stroke="#8e8eb8" stroke-width="0.85"/><path d="M5.1 7.6 L6.1 7 L6.1 11" fill="none" stroke="#8e8eb8" stroke-width="0.9"/><ellipse cx="8.9" cy="9" rx="1.1" ry="1.6" fill="none" stroke="#8e8eb8" stroke-width="0.85"/></svg><div class="t" style="left:23px;top:273px;font-size:12px;line-height:19px;color:#000;;letter-spacing:-0.006px;">Deny log on locally</div><div class="t" style="left:357px;top:273px;font-size:12px;line-height:19px;color:#000;;letter-spacing:0.08px;">Not Defined</div><div style="position:absolute;left:21px;top:291px;width:500px;height:19px;background:#efefef"></div><svg style="position:absolute;left:7px;top:293px;" width="14" height="16" viewBox="0 0 14 16" shape-rendering="crispEdges"><defs><pattern id="dith" width="2" height="2" patternUnits="userSpaceOnUse"><rect width="2" height="2" fill="#ffffff"/><rect width="1" height="1" fill="#0564c8"/><rect x="1" y="1" width="1" height="1" fill="#0564c8"/></pattern></defs><path d="M0 0 L10 0 L13 3 L13 15 L11 13.5 L10 13.5 L9 13 L8 14 L5 14 L4 13 L3 13.5 L1.5 13 L0 13 Z" fill="url(#dith)"/></svg><div class="t" style="left:23px;top:292px;font-size:12px;line-height:19px;color:#000;;letter-spacing:-0.121px;">Deny log on through Remote Desktop Services</div><div class="t" style="left:357px;top:292px;font-size:12px;line-height:19px;color:#000;;letter-spacing:-0.433px;">T2RAS\nlauser</div><svg style="position:absolute;left:7px;top:312px;" width="14" height="16" viewBox="0 0 14 16"><path d="M0.5 0.5 L9.5 0.5 L12.5 3.5 L12.5 14.5 L11 13 L10 13 L9 12.5 L8 13.5 L5 13.5 L4 12.5 L3 13 L1.5 12.5 L0.5 12.5 Z" fill="#ffffff" stroke="#a4a4a4" stroke-width="1"/><path d="M9.5 0.5 L9.5 3.5 L12.5 3.5" fill="#ececec" stroke="#b8b8b8" stroke-width="0.8"/><path d="M1.8 2.6 L2.8 2 L2.8 6" fill="none" stroke="#8e8eb8" stroke-width="0.9"/><ellipse cx="5.7" cy="3.9" rx="1.1" ry="1.6" fill="none" stroke="#8e8eb8" stroke-width="0.85"/><ellipse cx="3" cy="9" rx="1" ry="1.6" fill="none" stroke="#8e8eb8" stroke-width="0.85"/><path d="M5.1 7.6 L6.1 7 L6.1 11" fill="none" stroke="#8e8eb8" stroke-width="0.9"/><ellipse cx="8.9" cy="9" rx="1.1" ry="1.6" fill="none" stroke="#8e8eb8" stroke-width="0.85"/></svg><div class="t" style="left:23px;top:311px;font-size:12px;line-height:19px;color:#000;;letter-spacing:-0.067px;">Enable computer and user accounts to be trusted for delega...</div><div class="t" style="left:357px;top:311px;font-size:12px;line-height:19px;color:#000;;letter-spacing:0.08px;">Not Defined</div><svg style="position:absolute;left:7px;top:331px;" width="14" height="16" viewBox="0 0 14 16"><path d="M0.5 0.5 L9.5 0.5 L12.5 3.5 L12.5 14.5 L11 13 L10 13 L9 12.5 L8 13.5 L5 13.5 L4 12.5 L3 13 L1.5 12.5 L0.5 12.5 Z" fill="#ffffff" stroke="#a4a4a4" stroke-width="1"/><path d="M9.5 0.5 L9.5 3.5 L12.5 3.5" fill="#ececec" stroke="#b8b8b8" stroke-width="0.8"/><path d="M1.8 2.6 L2.8 2 L2.8 6" fill="none" stroke="#8e8eb8" stroke-width="0.9"/><ellipse cx="5.7" cy="3.9" rx="1.1" ry="1.6" fill="none" stroke="#8e8eb8" stroke-width="0.85"/><ellipse cx="3" cy="9" rx="1" ry="1.6" fill="none" stroke="#8e8eb8" stroke-width="0.85"/><path d="M5.1 7.6 L6.1 7 L6.1 11" fill="none" stroke="#8e8eb8" stroke-width="0.9"/><ellipse cx="8.9" cy="9" rx="1.1" ry="1.6" fill="none" stroke="#8e8eb8" stroke-width="0.85"/></svg><div class="t" style="left:23px;top:330px;font-size:12px;line-height:19px;color:#000;;letter-spacing:-0.012px;">Force shutdown from a remote system</div><div class="t" style="left:357px;top:330px;font-size:12px;line-height:19px;color:#000;;letter-spacing:0.08px;">Not Defined</div><svg style="position:absolute;left:7px;top:350px;" width="14" height="16" viewBox="0 0 14 16"><path d="M0.5 0.5 L9.5 0.5 L12.5 3.5 L12.5 14.5 L11 13 L10 13 L9 12.5 L8 13.5 L5 13.5 L4 12.5 L3 13 L1.5 12.5 L0.5 12.5 Z" fill="#ffffff" stroke="#a4a4a4" stroke-width="1"/><path d="M9.5 0.5 L9.5 3.5 L12.5 3.5" fill="#ececec" stroke="#b8b8b8" stroke-width="0.8"/><path d="M1.8 2.6 L2.8 2 L2.8 6" fill="none" stroke="#8e8eb8" stroke-width="0.9"/><ellipse cx="5.7" cy="3.9" rx="1.1" ry="1.6" fill="none" stroke="#8e8eb8" stroke-width="0.85"/><ellipse cx="3" cy="9" rx="1" ry="1.6" fill="none" stroke="#8e8eb8" stroke-width="0.85"/><path d="M5.1 7.6 L6.1 7 L6.1 11" fill="none" stroke="#8e8eb8" stroke-width="0.9"/><ellipse cx="8.9" cy="9" rx="1.1" ry="1.6" fill="none" stroke="#8e8eb8" stroke-width="0.85"/></svg><div class="t" style="left:23px;top:349px;font-size:12px;line-height:19px;color:#000;;letter-spacing:-0.174px;">Generate security audits</div><div class="t" style="left:357px;top:349px;font-size:12px;line-height:19px;color:#000;;letter-spacing:0.08px;">Not Defined</div><svg style="position:absolute;left:7px;top:369px;" width="14" height="16" viewBox="0 0 14 16"><path d="M0.5 0.5 L9.5 0.5 L12.5 3.5 L12.5 14.5 L11 13 L10 13 L9 12.5 L8 13.5 L5 13.5 L4 12.5 L3 13 L1.5 12.5 L0.5 12.5 Z" fill="#ffffff" stroke="#a4a4a4" stroke-width="1"/><path d="M9.5 0.5 L9.5 3.5 L12.5 3.5" fill="#ececec" stroke="#b8b8b8" stroke-width="0.8"/><path d="M1.8 2.6 L2.8 2 L2.8 6" fill="none" stroke="#8e8eb8" stroke-width="0.9"/><ellipse cx="5.7" cy="3.9" rx="1.1" ry="1.6" fill="none" stroke="#8e8eb8" stroke-width="0.85"/><ellipse cx="3" cy="9" rx="1" ry="1.6" fill="none" stroke="#8e8eb8" stroke-width="0.85"/><path d="M5.1 7.6 L6.1 7 L6.1 11" fill="none" stroke="#8e8eb8" stroke-width="0.9"/><ellipse cx="8.9" cy="9" rx="1.1" ry="1.6" fill="none" stroke="#8e8eb8" stroke-width="0.85"/></svg><div class="t" style="left:23px;top:368px;font-size:12px;line-height:19px;color:#000;;letter-spacing:0.01px;">Impersonate a client after authentication</div><div class="t" style="left:357px;top:368px;font-size:12px;line-height:19px;color:#000;;letter-spacing:0.08px;">Not Defined</div><svg style="position:absolute;left:7px;top:388px;" width="14" height="16" viewBox="0 0 14 16"><path d="M0.5 0.5 L9.5 0.5 L12.5 3.5 L12.5 14.5 L11 13 L10 13 L9 12.5 L8 13.5 L5 13.5 L4 12.5 L3 13 L1.5 12.5 L0.5 12.5 Z" fill="#ffffff" stroke="#a4a4a4" stroke-width="1"/><path d="M9.5 0.5 L9.5 3.5 L12.5 3.5" fill="#ececec" stroke="#b8b8b8" stroke-width="0.8"/><path d="M1.8 2.6 L2.8 2 L2.8 6" fill="none" stroke="#8e8eb8" stroke-width="0.9"/><ellipse cx="5.7" cy="3.9" rx="1.1" ry="1.6" fill="none" stroke="#8e8eb8" stroke-width="0.85"/><ellipse cx="3" cy="9" rx="1" ry="1.6" fill="none" stroke="#8e8eb8" stroke-width="0.85"/><path d="M5.1 7.6 L6.1 7 L6.1 11" fill="none" stroke="#8e8eb8" stroke-width="0.9"/><ellipse cx="8.9" cy="9" rx="1.1" ry="1.6" fill="none" stroke="#8e8eb8" stroke-width="0.85"/></svg><div class="t" style="left:23px;top:387px;font-size:12px;line-height:19px;color:#000;;letter-spacing:-0.207px;">Increase a process working set</div><div class="t" style="left:357px;top:387px;font-size:12px;line-height:19px;color:#000;;letter-spacing:0.08px;">Not Defined</div><svg style="position:absolute;left:7px;top:407px;" width="14" height="16" viewBox="0 0 14 16"><path d="M0.5 0.5 L9.5 0.5 L12.5 3.5 L12.5 14.5 L11 13 L10 13 L9 12.5 L8 13.5 L5 13.5 L4 12.5 L3 13 L1.5 12.5 L0.5 12.5 Z" fill="#ffffff" stroke="#a4a4a4" stroke-width="1"/><path d="M9.5 0.5 L9.5 3.5 L12.5 3.5" fill="#ececec" stroke="#b8b8b8" stroke-width="0.8"/><path d="M1.8 2.6 L2.8 2 L2.8 6" fill="none" stroke="#8e8eb8" stroke-width="0.9"/><ellipse cx="5.7" cy="3.9" rx="1.1" ry="1.6" fill="none" stroke="#8e8eb8" stroke-width="0.85"/><ellipse cx="3" cy="9" rx="1" ry="1.6" fill="none" stroke="#8e8eb8" stroke-width="0.85"/><path d="M5.1 7.6 L6.1 7 L6.1 11" fill="none" stroke="#8e8eb8" stroke-width="0.9"/><ellipse cx="8.9" cy="9" rx="1.1" ry="1.6" fill="none" stroke="#8e8eb8" stroke-width="0.85"/></svg><div class="t" style="left:23px;top:406px;font-size:12px;line-height:19px;color:#000;;letter-spacing:-0.048px;">Increase scheduling priority</div><div class="t" style="left:357px;top:406px;font-size:12px;line-height:19px;color:#000;;letter-spacing:0.08px;">Not Defined</div><svg style="position:absolute;left:7px;top:426px;" width="14" height="16" viewBox="0 0 14 16"><path d="M0.5 0.5 L9.5 0.5 L12.5 3.5 L12.5 14.5 L11 13 L10 13 L9 12.5 L8 13.5 L5 13.5 L4 12.5 L3 13 L1.5 12.5 L0.5 12.5 Z" fill="#ffffff" stroke="#a4a4a4" stroke-width="1"/><path d="M9.5 0.5 L9.5 3.5 L12.5 3.5" fill="#ececec" stroke="#b8b8b8" stroke-width="0.8"/><path d="M1.8 2.6 L2.8 2 L2.8 6" fill="none" stroke="#8e8eb8" stroke-width="0.9"/><ellipse cx="5.7" cy="3.9" rx="1.1" ry="1.6" fill="none" stroke="#8e8eb8" stroke-width="0.85"/><ellipse cx="3" cy="9" rx="1" ry="1.6" fill="none" stroke="#8e8eb8" stroke-width="0.85"/><path d="M5.1 7.6 L6.1 7 L6.1 11" fill="none" stroke="#8e8eb8" stroke-width="0.9"/><ellipse cx="8.9" cy="9" rx="1.1" ry="1.6" fill="none" stroke="#8e8eb8" stroke-width="0.85"/></svg><div class="t" style="left:23px;top:425px;font-size:12px;line-height:19px;color:#000;;letter-spacing:-0.086px;">Load and unload device drivers</div><div class="t" style="left:357px;top:425px;font-size:12px;line-height:19px;color:#000;;letter-spacing:0.08px;">Not Defined</div><div class="t" style="left:7px;top:1px;font-size:12px;line-height:25px;color:#000;;">Policy</div><div class="t" style="left:357px;top:1px;font-size:12px;line-height:25px;color:#000;;letter-spacing:-0.023px;">Policy Setting</div><div style="position:absolute;left:350px;top:1px;width:1px;height:24px;background:#e5e5e5"></div><svg style="position:absolute;left:172px;top:0px;" width="10" height="7" viewBox="0 0 10 7"><path d="M1.2 5 L4.6 1.6 L8 5" fill="none" stroke="#505050" stroke-width="1.2"/></svg></div>
<div style="position:absolute;left:276px;top:519px;width:500px;height:17px;background:#f0f0f0"></div>
<div style="position:absolute;left:294px;top:519px;width:405px;height:15px;background:#cdcdcd"></div>
<svg style="position:absolute;left:278px;top:519px;" width="15" height="16" viewBox="0 0 15 16"><path d="M9 4.5 L5.5 8 L9 11.5" fill="none" stroke="#505050" stroke-width="2"/></svg>
<svg style="position:absolute;left:747px;top:519px;" width="15" height="16" viewBox="0 0 15 16"><path d="M5 4.5 L8.5 8 L5 11.5" fill="none" stroke="#505050" stroke-width="2"/></svg>
<div style="position:absolute;left:1179px;top:37px;width:5px;height:28px;background:#fbfbfb"></div>
<div style="position:absolute;left:1179px;top:65px;width:5px;height:21px;background:#dedede;border-top:1px solid #7a7a7a;border-bottom:1px solid #7a7a7a;box-sizing:border-box"></div>
<div style="position:absolute;left:1179px;top:86px;width:5px;height:458px;background:#ffffff"></div>
<div style="position:absolute;left:1179px;top:112px;width:5px;height:1px;background:#6d7fa0"></div>
<div style="position:absolute;left:1179px;top:435px;width:5px;height:1px;background:#8a8a8a"></div>
<div style="position:absolute;left:1179px;top:440px;width:5px;height:1px;background:#d0d0d0"></div>
<div style="position:absolute;left:1179px;top:446px;width:5px;height:1px;background:#8a8a8a"></div>
<div style="position:absolute;left:1179px;top:490px;width:5px;height:1px;background:#7a8aa0"></div>
<div style="position:absolute;left:782px;top:544px;width:402px;height:16px;background:#ffffff"></div>
<div style="position:absolute;left:781px;top:544px;width:1px;height:16px;background:#6a6a6a"></div>
<div style="position:absolute;left:762px;top:37px;width:417px;height:507px;background:#f0f0f0;border:1px solid #5f5f5f;box-sizing:border-box"></div>
<div style="position:absolute;left:763px;top:38px;width:415px;height:30px;background:#fff"></div>
<div style="position:absolute;left:1177px;top:68px;width:1px;height:475px;background:#fff"></div>
<div style="position:absolute;left:763px;top:542px;width:415px;height:1px;background:#fff"></div>
<div class="t" style="left:771px;top:44px;font-size:12px;line-height:18px;color:#000;letter-spacing:-0.15px;letter-spacing:-0.155px;">Deny log on through Remote Desktop Services Properties</div>
<svg style="position:absolute;left:1105px;top:45px;" width="10" height="14" viewBox="0 0 10 14"><path d="M2.6 4.2 Q2.6 1.8 5.2 1.8 Q7.8 1.8 7.8 4.2 Q7.8 5.6 6.4 6.5 Q5.2 7.3 5.2 8.8 L5.2 9.6" fill="none" stroke="#000" stroke-width="1.1"/><rect x="4.6" y="10.8" width="1.3" height="1.3" fill="#000"/></svg>
<svg style="position:absolute;left:1150px;top:47px;" width="10" height="10" viewBox="0 0 10 10"><path d="M0.3 0.3 L9.7 9.7 M9.7 0.3 L0.3 9.7" stroke="#000" stroke-width="1.1"/></svg>
<div style="position:absolute;left:769px;top:95px;width:401px;height:411px;background:#fff;border:1px solid #d9d9d9;box-sizing:border-box"></div>
<div style="position:absolute;left:889px;top:77px;width:43px;height:19px;background:#f0f0f0;border:1px solid #d9d9d9;border-bottom:none;box-sizing:border-box"></div>
<div style="position:absolute;left:769px;top:75px;width:121px;height:21px;background:#fff;border:1px solid #d9d9d9;border-bottom:none;box-sizing:border-box"></div>
<div class="t" style="left:777px;top:79px;font-size:11px;line-height:13px;color:#000;letter-spacing:-0.25px;letter-spacing:-0.236px;">Security Policy Setting</div>
<div class="t" style="left:894px;top:80px;font-size:11px;line-height:13px;color:#000;letter-spacing:-0.2px;letter-spacing:-0.467px;">Explain</div>
<svg style="position:absolute;left:782px;top:104px;" width="40" height="40" viewBox="0 0 40 40"><defs><linearGradient id="sv1" x1="0" x2="1"><stop offset="0" stop-color="#dfe2e5"/><stop offset="1" stop-color="#9ca3a9"/></linearGradient><linearGradient id="sv2" x1="0" x2="0" y1="0" y2="1"><stop offset="0" stop-color="#f4f5f6"/><stop offset="1" stop-color="#c9cdd1"/></linearGradient></defs><rect x="6.5" y="5.5" width="8" height="18" fill="url(#sv2)" stroke="#a3a9ae"/><rect x="7.5" y="6.5" width="6" height="1.5" fill="#3a4850"/><path d="M7.5 11h6M7.5 14h6M7.5 17h6" stroke="#b4babf"/><path d="M24.5 7.5 L33 8.5 L33 33 L24.5 34 Z" fill="url(#sv1)" stroke="#8d9399"/><rect x="15.5" y="7.5" width="9" height="26.5" fill="url(#sv2)" stroke="#a3a9ae"/><rect x="16.5" y="8.5" width="7" height="1.5" fill="#3a4850"/><path d="M16.5 13h7M16.5 16h7M16.5 21h7M16.5 24h7M16.5 27h7M16.5 30h7" stroke="#aeb4b9"/><rect x="16.5" y="17.5" width="7" height="2" fill="#f6f7f8"/><rect x="21" y="31" width="2" height="2" fill="#36c836"/><path d="M5.5 21.5 L15.5 21.5 L16.5 20.5 L16.5 23 L15.5 23 L15.5 33 L5.5 33 Z" fill="#fdf6d6" stroke="#b9b59a"/><path d="M7.5 24.5h6M7.5 26.5h6M7.5 28.5h6M7.5 30.5h6" stroke="#7a78ac"/><rect x="2.5" y="32.5" width="13" height="2.8" rx="1.3" fill="#efe2ad" stroke="#ada27a" stroke-width="0.8"/></svg>
<div class="t" style="left:833px;top:109px;font-size:11px;line-height:13px;color:#000;letter-spacing:-0.2px;letter-spacing:-0.19px;">Deny log on through Remote Desktop Services</div>
<div style="position:absolute;left:784px;top:155px;width:13px;height:13px;background:#fff;border:1px solid #333;box-sizing:border-box"></div>
<svg style="position:absolute;left:784px;top:155px;" width="13" height="13" viewBox="0 0 13 13"><path d="M2.5 6.5 L5 9.2 L10.5 3.2" fill="none" stroke="#444" stroke-width="1.2"/></svg>
<div class="t" style="left:800px;top:155px;font-size:11px;line-height:13px;color:#000;letter-spacing:-0.2px;letter-spacing:-0.2px;">Define these policy settings:</div>
<div style="position:absolute;left:784px;top:178px;width:356px;height:167px;background:#fff;border:1px solid #828790;box-sizing:border-box"></div>
<div class="t" style="left:789px;top:181px;font-size:11px;line-height:13px;color:#000;letter-spacing:-0.2px;letter-spacing:-0.2px;">T2RAS\nlauser</div>
<div style="position:absolute;left:785px;top:361px;width:148px;height:21px;background:#e1e1e1;border:1px solid #adadad;box-sizing:border-box;text-align:center"><div class="bt" style="padding-top:1px;line-height:19px;color:#000;letter-spacing:-0.258px;text-indent:-0.258px">Add User or Group...</div></div>
<div style="position:absolute;left:941px;top:361px;width:73px;height:21px;background:#cccccc;border:1px solid #bfbfbf;box-sizing:border-box;text-align:center"><div class="bt" style="padding-top:1px;line-height:19px;color:#838383;letter-spacing:-0.42px;text-indent:-0.42px">Remove</div></div>
<svg style="position:absolute;left:785px;top:395px;" width="30" height="30" viewBox="0 0 30 30"><circle cx="15" cy="15" r="14.6" fill="#0f6fd4" stroke="#0a55a8" stroke-width="0.6"/><rect x="14" y="6" width="2.2" height="2" fill="#fff"/><rect x="14" y="9.5" width="2.2" height="14.5" fill="#fff"/></svg>
<div class="t" style="left:821px;top:392px;font-size:11px;line-height:13px;color:#000;letter-spacing:-0.2px;letter-spacing:-0.202px;">This setting is not compatible with computers running Windows</div>
<div class="t" style="left:821px;top:405px;font-size:11px;line-height:13px;color:#000;letter-spacing:-0.2px;letter-spacing:-0.171px;">2000 Service Pack 1 or earlier.  Apply Group Policy objects</div>
<div class="t" style="left:821px;top:418px;font-size:11px;line-height:13px;color:#000;letter-spacing:-0.2px;letter-spacing:-0.207px;">containing this setting only to computers running a later version of</div>
<div class="t" style="left:821px;top:431px;font-size:11px;line-height:13px;color:#000;letter-spacing:-0.2px;letter-spacing:-0.255px;">the operating system.</div>
<div style="position:absolute;left:936px;top:514px;width:73px;height:21px;background:#e1e1e1;border:2px solid #0078d7;box-sizing:border-box;text-align:center"><div class="bt" style="padding-top:0px;line-height:19px;color:#000;letter-spacing:0.0px;text-indent:0.0px">OK</div></div>
<div style="position:absolute;left:1017px;top:514px;width:73px;height:21px;background:#e1e1e1;border:1px solid #adadad;box-sizing:border-box;text-align:center"><div class="bt" style="padding-top:0px;line-height:19px;color:#000;letter-spacing:-0.08px;text-indent:-0.08px">Cancel</div></div>
<div style="position:absolute;left:1098px;top:514px;width:73px;height:21px;background:#cccccc;border:1px solid #bfbfbf;box-sizing:border-box;text-align:center"><div class="bt" style="padding-top:0px;line-height:19px;color:#838383;letter-spacing:-0.65px;text-indent:-0.65px">Apply</div></div>
<div style="position:absolute;left:560px;top:539px;width:1px;height:21px;background:#d9d9d9"></div>
<div style="position:absolute;left:693px;top:539px;width:1px;height:21px;background:#d9d9d9"></div>
<div style="position:absolute;left:778px;top:544px;width:1px;height:14px;background:#d9d9d9"></div>
</body></html>
